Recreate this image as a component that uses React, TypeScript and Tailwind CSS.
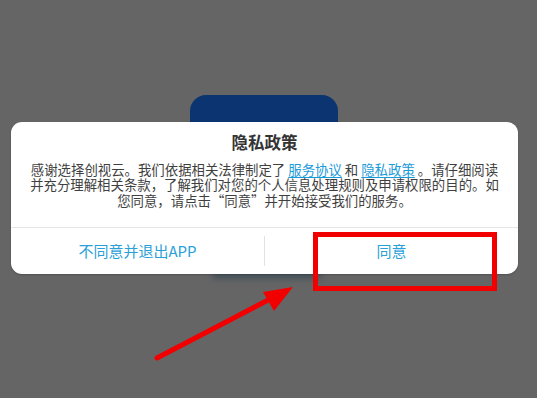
export default function App() {
  return (
    <div
      className="relative w-[537px] h-[398px] overflow-hidden bg-[#656565]"
      style={{ fontFamily: '"Noto Sans CJK SC", "Noto Sans", sans-serif' }}
    >
      {/* button behind the modal */}
      <div className="absolute left-[190px] top-[95px] w-[148px] h-[120px] rounded-[16px] bg-[#0b3470]" />
      {/* soft shade peeking below the modal */}
      <div className="absolute left-[212px] top-[270px] w-[110px] h-[9px] rounded-full bg-[#44525a] blur-[3px]" />

      {/* modal */}
      <div className="absolute left-[11px] top-[122px] w-[507px] h-[152px] rounded-[11px] bg-white flex flex-col shadow-[0_1px_2px_rgba(0,0,0,0.2)]">
        <div className="h-[105px] flex flex-col items-center">
          <div className="mt-[9px] h-[22px] leading-[22px] text-[16.5px] font-bold text-[#333]">隐私政策</div>
          <div className="mt-[9px] text-center text-[13.4px] leading-[15.3px] text-[#3f3f3f]">
            感谢选择创视云。我们依据相关法律制定了 <span className="text-[#1a9ad8] underline underline-offset-2">服务协议</span> 和{' '}
            <span className="text-[#1a9ad8] underline underline-offset-2">隐私政策</span> 。请仔细阅读
            <br />
            并充分理解相关条款，了解我们对您的个人信息处理规则及申请权限的目的。如
            <br />
            您同意，请点击“同意”并开始接受我们的服务。
          </div>
        </div>
        <div className="flex-1 flex items-center border-t border-[#e6e6e6]">
          <div className="flex-1 text-center text-[15px] text-[#2a9fd8]">不同意并退出APP</div>
          <div className="w-px h-[30px] bg-[#e2e2e2]" />
          <div className="flex-1 text-center text-[15px] text-[#2a9fd8]">同意</div>
        </div>
      </div>

      {/* annotation box */}
      <div className="absolute left-[313px] top-[232px] w-[184px] h-[59px] border-[5px] border-[#f20000]" />

      {/* annotation arrow */}
      <svg className="absolute left-0 top-0" width="537" height="398" viewBox="0 0 537 398">
        <line x1="157" y1="358" x2="272" y2="298" stroke="#f20000" strokeWidth="5" strokeLinecap="round" />
        <polygon points="293,287 263,292 274,311" fill="#f20000" />
      </svg>
    </div>
  );
}
